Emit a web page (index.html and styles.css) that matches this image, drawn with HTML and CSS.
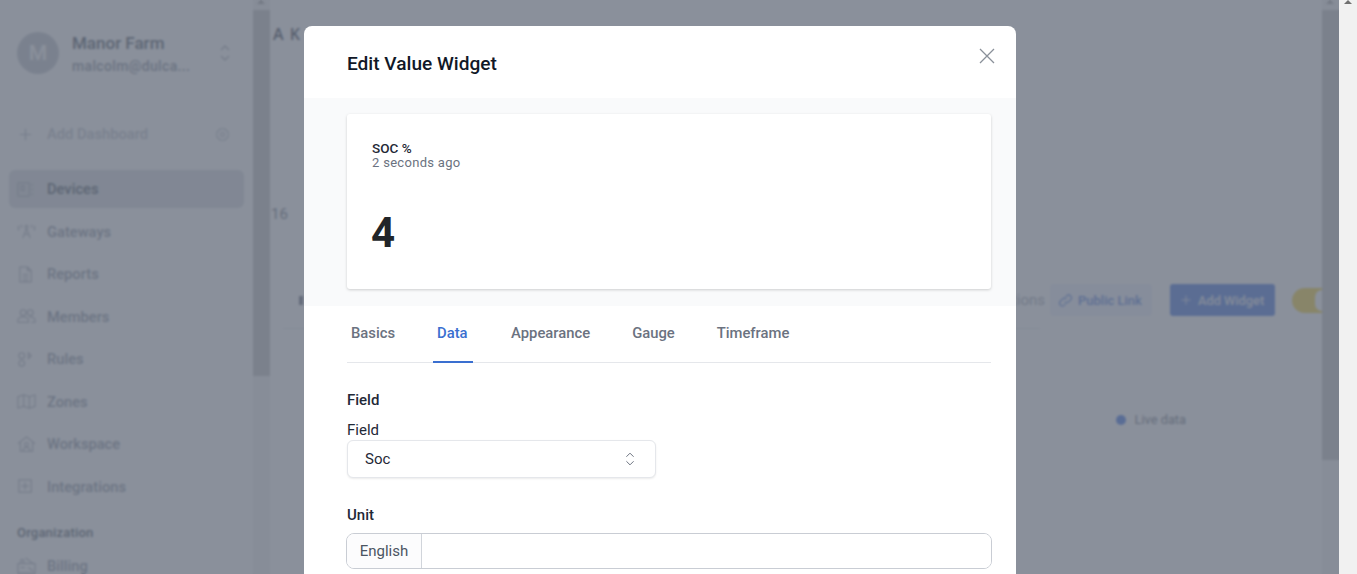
FILE: index.html
```html
<!DOCTYPE html>
<html lang="en">
<head>
<meta charset="utf-8">
<title>Edit Value Widget</title>
<link rel="stylesheet" href="styles.css">
</head>
<body>
<div class="window">
  <div class="app">
    <aside class="sidebar">
      <div class="account">
        <div class="avatar">M</div>
        <div class="account-text">
          <div class="account-name">Manor Farm</div>
          <div class="account-mail">malcolm@dulca...</div>
        </div>
        <svg class="updown" viewBox="0 0 12 20"><path d="M2 7l4-4 4 4M2 13l4 4 4-4"/></svg>
      </div>
      <div class="add-dash">
        <svg class="ico-plus" viewBox="0 0 16 16"><path d="M8 1v14M1 8h14"/></svg>
        <span class="add-label">Add Dashboard</span>
        <svg class="ico-gear" viewBox="0 0 16 16"><path d="M8 1l1.400 1.500 1.900-.4.700 1.900 1.900.7-.4 1.900L15 8l-1.500 1.400.4 1.900-1.900.7-.7 1.900-1.900-.4L8 15l-1.400-1.500-1.900.4-.7-1.900-1.900-.7.4-1.900L1 8l1.500-1.400-.4-1.900 1.900-.7.7-1.900 1.900.4z"/><circle cx="8" cy="8" r="2.200"/></svg>
      </div>
      <nav class="nav">
        <a class="nav-item active"><svg class="ico" viewBox="0 0 20 20"><rect x="1" y="3" width="12" height="14" rx="1"/><path d="M4.500 6v5h3V6zM16 4v2M16 9v2M16 14v2"/></svg><span>Devices</span></a>
        <a class="nav-item"><svg class="ico" viewBox="0 0 20 20"><path d="M10 7L6 17M10 7l4 10M7.500 13h5M1.500 4v5M4.500 3v3M15.500 3v3M18.500 4v5"/><circle cx="10" cy="5" r="1.500"/></svg><span>Gateways</span></a>
        <a class="nav-item"><svg class="ico" viewBox="0 0 20 20"><path d="M3 2h8l4 4v12H3zM11 2v4h4M6 10h6M6 13h6M6 16h6"/></svg><span>Reports</span></a>
        <a class="nav-item"><svg class="ico" viewBox="0 0 20 20"><circle cx="6.500" cy="6" r="3"/><circle cx="14" cy="6" r="3"/><path d="M1 16v-2c0-2 2-3.500 5.500-3.500S12 12 12 14v2zM13 10.500c3.500 0 6 1.500 6 3.500v2h-4"/></svg><span>Members</span></a>
        <a class="nav-item"><svg class="ico" viewBox="0 0 20 20"><circle cx="5" cy="6" r="3"/><circle cx="5" cy="14" r="3"/><path d="M12 3v6l3-3z"/></svg><span>Rules</span></a>
        <a class="nav-item"><svg class="ico" viewBox="0 0 20 20"><path d="M1 5l6-2 6 2 6-2v12l-6 2-6-2-6 2zM7 3v12M13 5v12"/></svg><span>Zones</span></a>
        <a class="nav-item"><svg class="ico" viewBox="0 0 20 20"><path d="M1 9l9-7 9 7M3.500 8v9h13V8"/><circle cx="10" cy="10" r="2"/><path d="M6.500 17c0-2.500 1.500-4 3.500-4s3.500 1.500 3.500 4"/></svg><span>Workspace</span></a>
        <a class="nav-item"><svg class="ico" viewBox="0 0 20 20"><rect x="2" y="3" width="13" height="13"/><path d="M8.500 5.500v8M4.500 9.500h8"/></svg><span>Integrations</span></a>
      </nav>
      <div class="nav-heading">Organization</div>
      <a class="nav-item"><svg class="ico" viewBox="0 0 20 20"><path d="M1 8h18v10H1zM4 8V4h3v4M9 2l8 6M12 12l5 4M4 12h4"/></svg><span>Billing</span></a>
    </aside>
    <div class="scrollbar sidebar-scroll">
      <span class="arrow"></span>
      <div class="thumb sidebar-thumb"></div>
    </div>
    <main class="main">
      <div class="brand">A K</div>
      <div class="stat">16</div>
      <div class="toolbar">
        <span class="tick"></span>
        <span class="tool-actions">Actions</span>
        <a class="btn-link"><svg class="ico-link" viewBox="0 0 16 16"><path d="M7 9.500a3 3 0 0 0 4.200 0l2.500-2.500a3 3 0 0 0-4.200-4.200L8.200 4"/><path d="M9 6.500a3 3 0 0 0-4.200 0L2.300 9a3 3 0 0 0 4.200 4.200L7.800 12"/></svg>Public Link</a>
        <a class="btn-add"><svg class="ico-add" viewBox="0 0 16 16"><path d="M8 2v12M2 8h12"/></svg>Add Widget</a>
        <span class="toggle"><span class="knob"></span></span>
      </div>
      <div class="divider"></div>
      <div class="live"><span class="live-dot"></span>Live data</div>
    </main>
    <div class="scrollbar main-scroll">
      <span class="arrow"></span>
      <div class="thumb main-thumb"></div>
    </div>
  </div>
  <div class="window-scroll"><span class="arrow window-arrow"></span></div>

  <div class="overlay">
    <section class="modal">
      <header class="modal-head">
        <h2 class="modal-title">Edit Value Widget</h2>
        <svg class="close" viewBox="0 0 16 16"><path d="M1 1l14 14M15 1L1 15"/></svg>
      </header>
      <div class="preview">
        <div class="card">
          <div class="card-title">SOC %</div>
          <div class="card-time">2 seconds ago</div>
          <div class="card-value">4</div>
        </div>
      </div>
      <div class="form">
        <div class="tabs">
          <span class="tab">Basics</span>
          <span class="tab tab-active">Data</span>
          <span class="tab">Appearance</span>
          <span class="tab">Gauge</span>
          <span class="tab">Timeframe</span>
        </div>
        <h3 class="section-title">Field</h3>
        <div class="field-label">Field</div>
        <div class="select">
          <span>Soc</span>
          <svg class="select-icon" viewBox="0 0 12 20"><path d="M2 7.500L6 3.500l4 4M2 12.500L6 16.500l4-4"/></svg>
        </div>
        <h3 class="section-title unit-title">Unit</h3>
        <div class="input-group">
          <span class="addon">English</span>
          <span class="input"></span>
        </div>
      </div>
    </section>
  </div>
</div>
</body>
</html>
```

FILE: styles.css
```css
* { box-sizing: border-box; }
html, body { margin: 0; height: 100%; overflow: hidden; }
body { font-family: Roboto, "Liberation Sans", sans-serif; background: #fff; color: #111827; }
svg { fill: none; stroke: currentColor; flex: none; }

.window { position: relative; display: flex; height: 574px; overflow: hidden; }
.app { display: flex; width: 1339px; height: 574px; overflow: hidden; }
.window-scroll { width: 18px; background: #f1f1f1; position: relative; }

.sidebar { width: 253px; padding: 30px 9px 0; flex: none; }
.account { display: flex; align-items: center; padding-left: 8px; height: 46px; }
.avatar { width: 42px; height: 42px; border-radius: 50%; background: #c0c4cc; color: #fff; font-size: 21px; font-weight: 500; display: flex; align-items: center; justify-content: center; flex: none; }
.account-text { margin-left: 13px; flex: 1; min-width: 0; }
.account-name { font-size: 17px; font-weight: 500; color: #4b5563; line-height: 24px; }
.account-mail { font-size: 14px; font-weight: 500; color: #858c99; line-height: 20px; margin-top: 1px; letter-spacing: .35px; }
.updown { width: 12px; height: 20px; color: #aeb3bc; stroke-width: 1.5; margin-right: 13px; }

.add-dash { display: flex; align-items: center; margin-top: 48px; padding-left: 10px; height: 20px; color: #b0b5bf; font-size: 14.700px; font-weight: 500; }
.ico-plus { width: 13px; height: 13px; stroke-width: 1.5; }
.add-label { margin-left: 15px; flex: 1; color: #bcc1ca; }
.ico-gear { width: 15px; height: 15px; margin-right: 14px; stroke-width: .9; color: #9ca3af; }

.nav { display: flex; flex-direction: column; gap: 4.500px; margin-top: 26px; }
.nav-item { display: flex; align-items: center; height: 38px; padding-left: 8px; border-radius: 6px; font-size: 14.700px; font-weight: 500; color: #8b93a1; }
.nav-item span { margin-left: 11px; }
.nav-item.active { background: #d9dce1; color: #4b5563; }
.ico { width: 19px; height: 19px; stroke-width: 1.100; color: #a3a8b3; }
.nav-heading { font-size: 13px; font-weight: 500; color: #4b5563; padding-left: 8px; margin-top: 17px; line-height: 20px; letter-spacing: .2px; }
.sidebar .nav-heading + .nav-item { margin-top: 4px; }

.scrollbar { width: 17px; flex: none; padding-top: 10px; position: relative; background: #f1f1f1; }
.arrow { position: absolute; top: 0; left: 4px; border: 4px solid transparent; border-top: 0; border-bottom: 4px solid #a3a3a3; }
.window-arrow { left: 5px; border-bottom-color: #707070; }
.thumb { background: #c1c1c1; width: 17px; }
.sidebar-thumb { height: 366px; }
.main-thumb { height: 450px; }

.main { flex: 1; min-width: 0; position: relative; padding: 24px 0 0 4px; }
.brand { font-family: "Open Sans", Roboto, sans-serif; font-size: 16px; font-weight: 600; letter-spacing: 1px; color: #374151; line-height: 20px; margin-left: -1px; }
.stat { font-size: 15px; color: #6b7280; line-height: 20px; margin: 160px 0 0 -3px; }
.toolbar { display: flex; align-items: center; justify-content: flex-end; margin-top: 60px; height: 32px; }
.tick { width: 4px; height: 9px; background: #6b7280; margin-left: 25px; margin-right: auto; }
.tool-actions { font-size: 15px; color: #9ca3af; margin-right: 5px; }
.btn-link { display: flex; align-items: center; gap: 5px; height: 32px; width: 102px; padding-left: 8px; margin-right: 18px; background: #eef2ff; border-radius: 4px; color: #4f7bdc; font-size: 13px; font-weight: 500; }
.ico-link { width: 15px; height: 15px; stroke-width: 1.2; }
.btn-add { display: flex; align-items: center; gap: 6px; height: 32px; width: 105px; padding-left: 10px; background: #4475e0; border-radius: 3px; color: #e4e9f5; font-size: 12.800px; font-weight: 500; }
.ico-add { width: 12px; height: 12px; stroke-width: 1.2; }
.toggle { width: 30px; height: 25px; background: #f5d33a; border-radius: 13px 0 0 13px; margin-left: 17px; display: flex; align-items: center; justify-content: flex-end; }
.knob { width: 7px; height: 21px; border-radius: 11px 0 0 11px; background: #fff; }
.divider { height: 1px; width: 757px; margin: 12px 0 0 9px; background: #e5e7eb; }
.live { display: flex; align-items: center; gap: 9px; justify-content: flex-end; margin: 83px 136px 0 0; font-size: 12.800px; color: #6b7280; }
.live-dot { width: 10px; height: 10px; border-radius: 50%; background: #3f74e6; }

.overlay { position: absolute; top: 0; left: 0; width: 1339px; height: 574px; padding: 26px 19px 0 0; display: flex; justify-content: center; align-items: flex-start; background: rgba(99, 107, 121, .75); backdrop-filter: blur(1px); }
.modal { width: 712px; min-height: 560px; flex: none; background: #fff; border-radius: 8px 8px 0 0; }
.modal-head { display: flex; justify-content: space-between; padding: 25px 21px 0 43px; height: 72px; }
.modal-title { margin: 0; font-size: 19.100px; font-weight: 500; line-height: 26px; color: #111827; }
.close { width: 16px; height: 16px; margin-top: -3px; stroke-width: 1.3; color: #8a9099; }
.preview { background: #f9fafb; padding: 16px 25px 16px 43px; height: 208px; }
.card { background: #fff; height: 175px; border-radius: 3px; box-shadow: 0 1px 3px rgba(0,0,0,.18); padding: 27px 25px 0; }
.card-title { font-size: 13.500px; font-weight: 500; line-height: 14px; color: #1f2937; }
.card-time { font-size: 13px; line-height: 16px; color: #6b7280; letter-spacing: .3px; }
.card-value { font-size: 42px; font-weight: 700; line-height: 50px; color: #212529; margin: 37px 0 0 -1px; }

.form { padding: 0 25px 0 43px; }
.tabs { display: flex; height: 57px; border-bottom: 1px solid #e5e7eb; }
.tab { height: 57px; padding: 17px 4px 0; font-size: 14.800px; font-weight: 500; line-height: 20px; color: #6b7280; margin-right: 34px; }
.tab-active { color: #3a6fd0; border-bottom: 2px solid #3a6fd0; padding-right: 5.500px; }
.section-title { margin: 27px 0 0; font-size: 15px; font-weight: 500; line-height: 20px; color: #1f2937; }
.field-label { margin-top: 9.500px; font-size: 15px; line-height: 20px; font-weight: 400; color: #1f2937; }
.select { width: 309px; height: 38px; margin-top: .5px; padding: 0 19px 0 17px; display: flex; align-items: center; justify-content: space-between; background: #fff; border: 1px solid #e5e7eb; border-radius: 6px; box-shadow: 0 1px 2px rgba(0,0,0,.08); font-size: 15px; color: #1f2937; }
.select-icon { width: 12px; height: 18px; stroke-width: 1.100; color: #6b7280; }
.unit-title { margin-top: 27px; }
.input-group { display: flex; height: 36px; margin-top: 8px; width: 646px; margin-left: -1px; border: 1px solid #c9cdd4; border-radius: 8px; overflow: hidden; }
.addon { width: 75px; display: flex; align-items: center; justify-content: center; background: #fcfcfd; border-right: 1px solid #d1d5db; font-size: 15px; color: #4b5563; }
.input { flex: 1; background: #fff; }
```
